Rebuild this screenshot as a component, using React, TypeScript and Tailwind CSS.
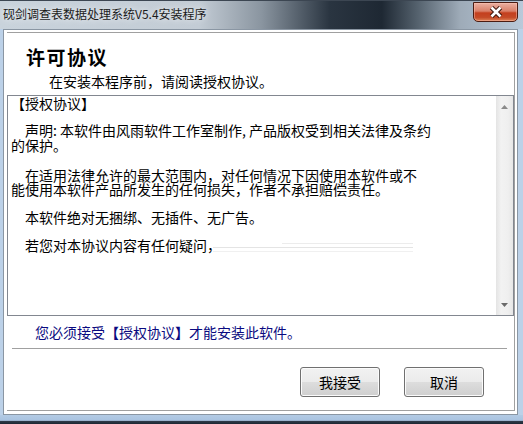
const CJK = '"Noto Sans CJK SC", "Noto Sans", sans-serif';

function CloseButton() {
  return (
    <div className="mt-[1px] mr-[5px] flex h-[20px] w-[45px] items-center justify-center rounded-b-[5px] border border-[#4b1c12] bg-[linear-gradient(to_bottom,#eab0a2_0%,#d98069_45%,#c43f1e_55%,#c44a27_80%,#de8357_100%)] shadow-[inset_0_0_0_1px_rgba(255,200,185,0.45)]">
      <svg width="14" height="12" viewBox="0 0 14 12">
        <path d="M2.5 1.5 L11.5 10.5 M11.5 1.5 L2.5 10.5" stroke="#3a140b" strokeWidth="4.6" />
        <path d="M2.5 1.5 L11.5 10.5 M11.5 1.5 L2.5 10.5" stroke="#ffffff" strokeWidth="2.6" />
      </svg>
    </div>
  );
}

function Btn({ label }: { label: string }) {
  return (
    <button className="h-[30px] w-[80px] rounded-[3px] border border-[#707070] bg-[linear-gradient(to_bottom,#f2f2f2_0%,#ebebeb_50%,#dddddd_51%,#cfcfcf_100%)] text-[14px] leading-[14px] text-black shadow-[inset_0_0_0_1px_#fbfbfb]">
      {label}
    </button>
  );
}

// half-width punctuation like the bitmap font in the shot
const H = ({ c }: { c: string }) => <span className="inline-block w-[7px]">{c}</span>;

function Line({ mt, children }: { mt: string; children: React.ReactNode }) {
  return <div className={`h-[14px] whitespace-nowrap leading-[14px] ${mt}`}>{children}</div>;
}

export default function App() {
  return (
    <div
      className="flex h-[424px] w-[523px] flex-col overflow-hidden bg-[#bcd1e8]"
      style={{ fontFamily: CJK }}
    >
      {/* title bar */}
      <div className="flex h-[29px] items-start justify-between border-t border-[#3c4652] bg-[linear-gradient(to_right,#c9d3dc_0%,#c3ccd5_38%,#8a95a0_50%,#2a3541_63%,#1e2833_73%,#56636f_80%,#9eabb8_88%,#b9c9da_100%)]">
        <span className="pl-[3px] pt-[6px] text-[12px] leading-[14px] text-[#1b1b1b] [text-shadow:0_0_6px_rgba(255,255,255,0.95)]">
          砚剑调查表数据处理系统V5.4安装程序
        </span>
        <CloseButton />
      </div>

      {/* client area */}
      <div className="ml-[3px] mr-[5px] h-[386px] border border-[#8a96a3] bg-white pb-[3px] pl-[3px] pr-[2px] pt-[2px]">
        <div className="flex h-full flex-col border-b border-r border-t border-[#a0a0a0]">
          {/* header */}
          <div className="h-[62px] shrink-0">
            <div className="pl-[19px] pt-[14px] text-[19px] font-bold leading-[20px] tracking-[1.5px] text-black">
              许可协议
            </div>
            <div className="mt-[7px] pl-[42px] text-[14px] leading-[14px] text-black">
              在安装本程序前，请阅读授权协议。
            </div>
          </div>

          {/* licence text box */}
          <div className="flex h-[221px] shrink-0 border border-[#828790]">
            <div className="flex-1 pl-[3px] text-[14px] text-black">
              <Line mt="mt-0">【授权协议】</Line>
              <Line mt="mt-[13px]">
                <span className="pl-[14px]">声明</span>
                <H c=":" />
                本软件由风雨软件工作室制作
                <H c="," />
                产品版权受到相关法律及条约
              </Line>
              <Line mt="mt-[1px]">的保护。</Line>
              <Line mt="mt-[16px]">
                <span className="pl-[14px]">在适用法律允许的最大范围内，对任何情况下因使用本软件或不</span>
              </Line>
              <Line mt="mt-0">能使用本软件产品所发生的任何损失，作者不承担赔偿责任。</Line>
              <Line mt="mt-[14px]">
                <span className="pl-[14px]">本软件绝对无捆绑、无插件、无广告。</span>
              </Line>
              <Line mt="mt-[14px]">
                <span className="pl-[14px]">若您对本协议内容有任何疑问，</span>
                <span className="ml-[-8px] inline-flex w-[200px] flex-col gap-[3px] align-middle">
                  <span className="ml-[69px] block h-[1px] bg-[#ececec]" />
                  <span className="block h-[1px] bg-[#e4e4e4]" />
                  <span className="block h-[1px] bg-[#f0f0f0]" />
                </span>
              </Line>
            </div>
            {/* scrollbar */}
            <div className="flex w-[17px] flex-col items-center justify-between bg-[linear-gradient(to_right,#e4e4e4,#f2f2f2_30%,#efefef_70%,#e6e6e6)] pb-[8px] pt-[9px]">
              <svg width="7" height="4" viewBox="0 0 7 4">
                <path d="M0 4 L3.5 0 L7 4Z" fill="#8a8a8a" />
              </svg>
              <svg width="7" height="4" viewBox="0 0 7 4">
                <path d="M0 0 L3.5 4 L7 0Z" fill="#6a6a6a" />
              </svg>
            </div>
          </div>

          {/* notice */}
          <div className="flex h-[32px] shrink-0 items-center pl-[28px] text-[14px] leading-[14px] text-[#0a0a80]">
            您必须接受<span className="font-bold">【</span>授权协议<span className="font-bold">】</span>才能安装此软件。
          </div>

          {/* etched separator */}
          <div className="ml-[5px] mr-[7px] h-[2px] shrink-0 border-b border-t border-b-white border-t-[#a0a0a0]" />

          {/* buttons */}
          <div className="flex justify-end gap-[24px] pr-[30px] pt-[17px]">
            <Btn label="我接受" />
            <Btn label="取消" />
          </div>
        </div>
      </div>

      {/* bottom frame */}
      <div className="flex-1 bg-[linear-gradient(to_bottom,#b3cbe4_0%,#a9c3e0_60%,#2e3a48_70%,#1d2733_100%)]" />
    </div>
  );
}
